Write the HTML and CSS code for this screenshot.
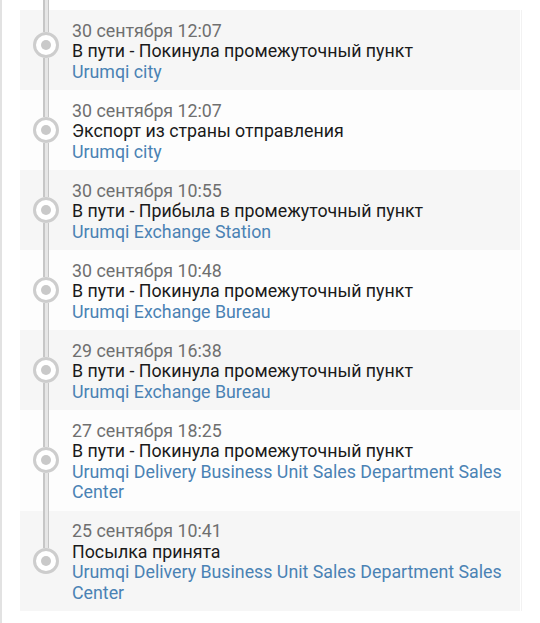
FILE: index.html
```html
<!DOCTYPE html>
<html lang="ru">
<head>
<meta charset="utf-8">
<link rel="stylesheet" href="styles.css">
</head>
<body>
<div class="page">
  <div class="track">
    <div class="row odd first">
      <div class="marker"><span class="seg top"></span><span class="dot"></span><span class="seg"></span></div>
      <div class="info">
        <div class="date">30 сентября 12:07</div>
        <div class="status">В пути - Покинула промежуточный пункт</div>
        <div class="place">Urumqi city</div>
      </div>
    </div>
    <div class="row">
      <div class="marker"><span class="seg"></span><span class="dot"></span><span class="seg"></span></div>
      <div class="info">
        <div class="date">30 сентября 12:07</div>
        <div class="status">Экспорт из страны отправления</div>
        <div class="place">Urumqi city</div>
      </div>
    </div>
    <div class="row odd">
      <div class="marker"><span class="seg"></span><span class="dot"></span><span class="seg"></span></div>
      <div class="info">
        <div class="date">30 сентября 10:55</div>
        <div class="status">В пути - Прибыла в промежуточный пункт</div>
        <div class="place">Urumqi Exchange Station</div>
      </div>
    </div>
    <div class="row">
      <div class="marker"><span class="seg"></span><span class="dot"></span><span class="seg"></span></div>
      <div class="info">
        <div class="date">30 сентября 10:48</div>
        <div class="status">В пути - Покинула промежуточный пункт</div>
        <div class="place">Urumqi Exchange Bureau</div>
      </div>
    </div>
    <div class="row odd">
      <div class="marker"><span class="seg"></span><span class="dot"></span><span class="seg"></span></div>
      <div class="info">
        <div class="date">29 сентября 16:38</div>
        <div class="status">В пути - Покинула промежуточный пункт</div>
        <div class="place">Urumqi Exchange Bureau</div>
      </div>
    </div>
    <div class="row">
      <div class="marker"><span class="seg"></span><span class="dot"></span><span class="seg"></span></div>
      <div class="info">
        <div class="date">27 сентября 18:25</div>
        <div class="status">В пути - Покинула промежуточный пункт</div>
        <div class="place">Urumqi Delivery Business Unit Sales Department Sales Center</div>
      </div>
    </div>
    <div class="row odd last">
      <div class="marker"><span class="seg"></span><span class="dot"></span><span class="seg end"></span></div>
      <div class="info">
        <div class="date">25 сентября 10:41</div>
        <div class="status">Посылка принята</div>
        <div class="place">Urumqi Delivery Business Unit Sales Department Sales Center</div>
      </div>
    </div>
  </div>
</div>
</body>
</html>
```

FILE: styles.css
```css
html, body {
  margin: 0;
  padding: 0;
  background: #ffffff;
}
body {
  font-family: Roboto, "Noto Sans", "Liberation Sans", sans-serif;
  width: 540px;
  height: 623px;
  overflow: hidden;
}
.page {
  box-sizing: border-box;
  height: 623px;
  border-left: 2px solid #e2e2e2;
  padding: 10px 0 0 18px;
}
.track {
  width: 500px;
  border-right: 1px solid #f2f2f2;
  padding-right: 1px;
}
.row {
  display: flex;
  background: #fdfdfd;
}
.row.odd {
  background: #f6f6f6;
}
.marker {
  width: 52px;
  flex: none;
  display: flex;
  flex-direction: column;
  align-items: center;
}
.seg {
  flex: 1;
  width: 6px;
  background: linear-gradient(to right, #c6c6c6 0 1.5px, #e6e6e6 1.5px 4.5px, #c6c6c6 4.5px 6px);
}
.seg.top {
  margin-top: -10px;
}
.seg.end {
  background: transparent;
}
.dot {
  flex: none;
  box-sizing: border-box;
  width: 26px;
  height: 26px;
  border: 3px solid #cdcdcd;
  border-radius: 50%;
  background: #ffffff;
  display: flex;
  align-items: center;
  justify-content: center;
}
.dot::after {
  content: "";
  width: 10px;
  height: 10px;
  border-radius: 50%;
  background: #c9c9c9;
}
.info {
  flex: 1;
  padding: 10.5px 14px 8px 0;
  font-size: 17.8px;
  line-height: 20.5px;
}
.date {
  color: #6f6f6f;
}
.status {
  color: #1a1a1a;
}
.place {
  color: #4a82b4;
}
```
